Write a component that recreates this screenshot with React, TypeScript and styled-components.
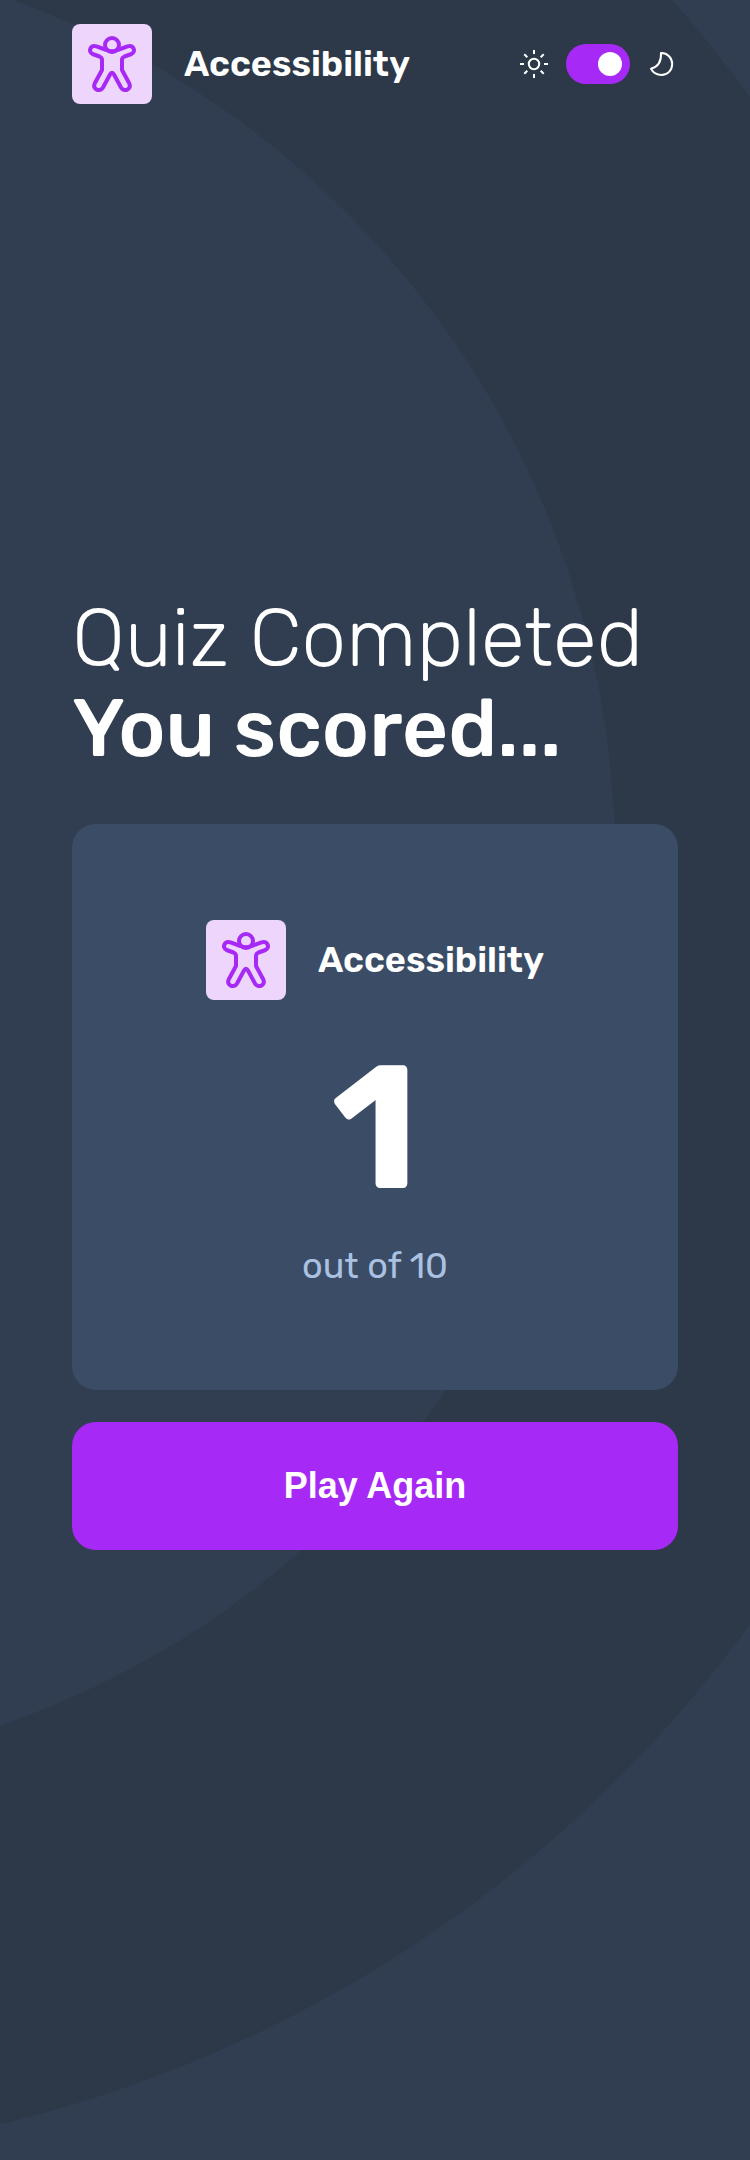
import React from "react";
import styled, { createGlobalStyle } from "styled-components";

const GlobalStyle = createGlobalStyle`
  *, *::before, *::after { box-sizing: border-box; }
  body {
    margin: 0;
    background: #313e51;
    color: #fff;
    font-family: "Rubik", "Inter", sans-serif;
  }
  h1, h2, p { margin: 0; }
`;

const Page = styled.div`
  position: relative;
  min-height: 2160px;
  padding: 24px 72px 0;
  overflow: hidden;
`;

const Backdrop = styled.svg`
  position: absolute;
  inset: 0;
  width: 750px;
  height: 2160px;
`;

const Header = styled.header`
  position: relative;
  display: flex;
  align-items: center;
  justify-content: space-between;
  height: 80px;
`;

const Subject = styled.div`
  display: flex;
  align-items: center;
  gap: 32px;
`;

const IconTile = styled.div`
  display: flex;
  width: 80px;
  height: 80px;
  border-radius: 8px;
  background: #edd5fb;
`;

const SubjectName = styled.span`
  font-size: 36px;
  font-weight: 600;
  line-height: 36px;
  white-space: nowrap;
`;

const ThemeSwitch = styled.div`
  display: flex;
  align-items: center;
  gap: 16px;
`;

const ModeIcon = styled.svg`
  width: 32px;
  height: 32px;
  fill: none;
  stroke: #fff;
  stroke-width: 2;
`;

const Track = styled.button`
  display: flex;
  align-items: center;
  justify-content: flex-end;
  width: 64px;
  height: 40px;
  padding: 8px;
  border: 0;
  border-radius: 20px;
  background: #a729f5;
`;

const Thumb = styled.span`
  width: 24px;
  height: 24px;
  border-radius: 50%;
  background: #fff;
`;

const Main = styled.main`
  position: relative;
  padding-top: 490px;
`;

const Title = styled.h1<{ $strong?: boolean }>`
  height: 90px;
  font-size: 80px;
  line-height: 90px;
  font-weight: ${(p) => (p.$strong ? 500 : 300)};
  white-space: nowrap;
`;

const ScoreCard = styled.section`
  display: flex;
  flex-direction: column;
  align-items: center;
  height: 566px;
  margin-top: 50px;
  padding-top: 96px;
  border-radius: 24px;
  background: #3b4d66;
`;

const Score = styled.p`
  margin-top: 38px;
  font-size: 176px;
  line-height: 180px;
  font-weight: 700;
`;

const Total = styled.p`
  margin-top: 21px;
  font-size: 36px;
  line-height: 54px;
  color: #abc1e1;
`;

const PlayButton = styled.button`
  display: block;
  width: 100%;
  height: 128px;
  margin-top: 32px;
  border: 0;
  border-radius: 24px;
  background: #a729f5;
  color: #fff;
  font-family: "Liberation Sans", Arial, sans-serif;
  font-size: 36px;
  font-weight: 700;
`;

function AccessibilityBadge() {
  return (
    <Subject>
      <IconTile>
        <svg width="80" height="80" viewBox="0 0 80 80" fill="none" stroke="#a729f5" strokeWidth="4" strokeLinejoin="round">
          <circle cx="40" cy="21" r="7" />
          <path d="M34.500 26 L24.500 22.300 C18.500 20.500 15.500 27.500 20.500 30 L27.500 32.500 Q30 33.500 30 36 V46 L22.700 59.500 C20 65.500 28 68.500 31 63.500 L38 50.500 Q40 47 42 50.500 L49 63.500 C52 68.500 60 65.500 57.300 59.500 L50 46 V36 Q50 33.500 52.500 32.500 L59.500 30 C64.500 27.500 61.500 20.500 55.500 22.300 L45.500 26 Q40 28.500 34.500 26 Z" />
        </svg>
      </IconTile>
      <SubjectName>Accessibility</SubjectName>
    </Subject>
  );
}

export default function App() {
  return (
    <>
      <GlobalStyle />
      <Page>
        <Backdrop viewBox="0 0 750 2160" aria-hidden="true">
          <circle cx="-301" cy="860.5" r="1107.500" fill="none" stroke="#2d3949" strokeWidth="383" />
        </Backdrop>
        <Header>
          <AccessibilityBadge />
          <ThemeSwitch>
            <ModeIcon viewBox="0 0 32 32">
              <circle cx="16" cy="16" r="5.200" />
              <path d="M16 2v4M16 26v4M2 16h4M26 16h4M6.300 6.300l3 3M22.700 22.700l3 3M6.300 25.700l3-3M22.700 9.300l3-3" />
            </ModeIcon>
            <Track aria-label="Dark mode"><Thumb /></Track>
            <ModeIcon viewBox="0 0 32 32">
              <path d="M15 5 C21.500 4.800 26.200 10 26.200 16 C26.200 22.300 21.500 27 15.500 27 C11 27 7 24.500 5 20.800 C11.500 19 15.500 14.500 15 5Z" strokeLinejoin="round" />
            </ModeIcon>
          </ThemeSwitch>
        </Header>
        <Main>
          <Title>Quiz Completed</Title>
          <Title as="h2" $strong>You scored...</Title>
          <ScoreCard>
            <AccessibilityBadge />
            <Score>1</Score>
            <Total>out of 10</Total>
          </ScoreCard>
          <PlayButton>Play Again</PlayButton>
        </Main>
      </Page>
    </>
  );
}
